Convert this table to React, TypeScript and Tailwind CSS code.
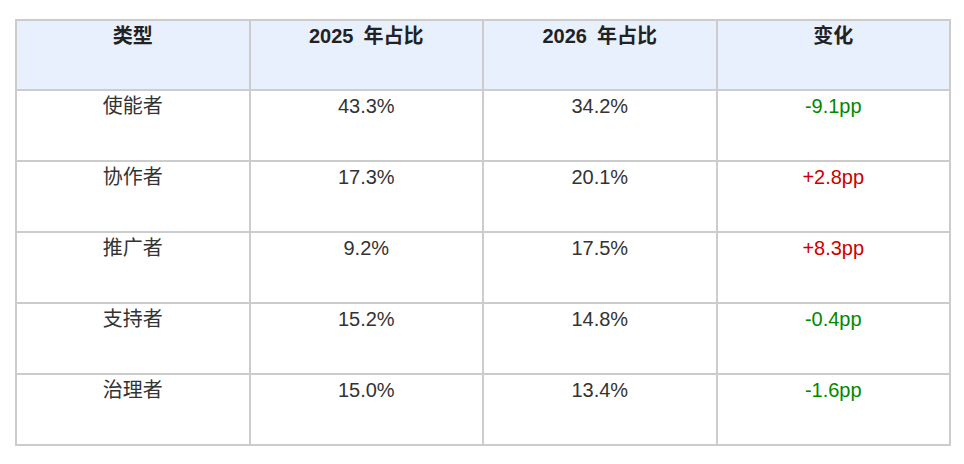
const rows = [
  { type: "使能者", y2025: "43.3%", y2026: "34.2%", change: "-9.1pp", up: false },
  { type: "协作者", y2025: "17.3%", y2026: "20.1%", change: "+2.8pp", up: true },
  { type: "推广者", y2025: "9.2%", y2026: "17.5%", change: "+8.3pp", up: true },
  { type: "支持者", y2025: "15.2%", y2026: "14.8%", change: "-0.4pp", up: false },
  { type: "治理者", y2025: "15.0%", y2026: "13.4%", change: "-1.6pp", up: false },
];

const headers = ["类型", "2025\u2002年占比", "2026\u2002年占比", "变化"];

const App = () => {
  return (
    <div
      className="min-h-screen bg-white pt-[19px] pl-[15px]"
      style={{ fontFamily: '"Liberation Sans", "Noto Sans CJK SC", sans-serif' }}
    >
      <div className="grid w-[936px] grid-cols-4 border-l-2 border-t-2 border-[#cccccc] text-[20px] leading-[24px]">
        {headers.map((h) => (
          <div
            key={h}
            className="h-[70px] border-b-2 border-r-2 border-[#cccccc] bg-[#e8f0fd] pt-[3px] text-center font-bold text-[#222222]"
          >
            {h}
          </div>
        ))}
        {rows.map((r) => (
          <div key={r.type} className="contents">
            <div className="h-[71px] border-b-2 border-r-2 border-[#cccccc] pt-[3px] text-center text-[#333333]">
              {r.type}
            </div>
            <div className="h-[71px] border-b-2 border-r-2 border-[#cccccc] pt-[3px] text-center text-[#333333]">
              {r.y2025}
            </div>
            <div className="h-[71px] border-b-2 border-r-2 border-[#cccccc] pt-[3px] text-center text-[#333333]">
              {r.y2026}
            </div>
            <div
              className={
                r.up
                  ? "h-[71px] border-b-2 border-r-2 border-[#cccccc] pt-[3px] text-center text-[#cc0000]"
                  : "h-[71px] border-b-2 border-r-2 border-[#cccccc] pt-[3px] text-center text-[#008800]"
              }
            >
              {r.change}
            </div>
          </div>
        ))}
      </div>
    </div>
  );
};

export default App;
